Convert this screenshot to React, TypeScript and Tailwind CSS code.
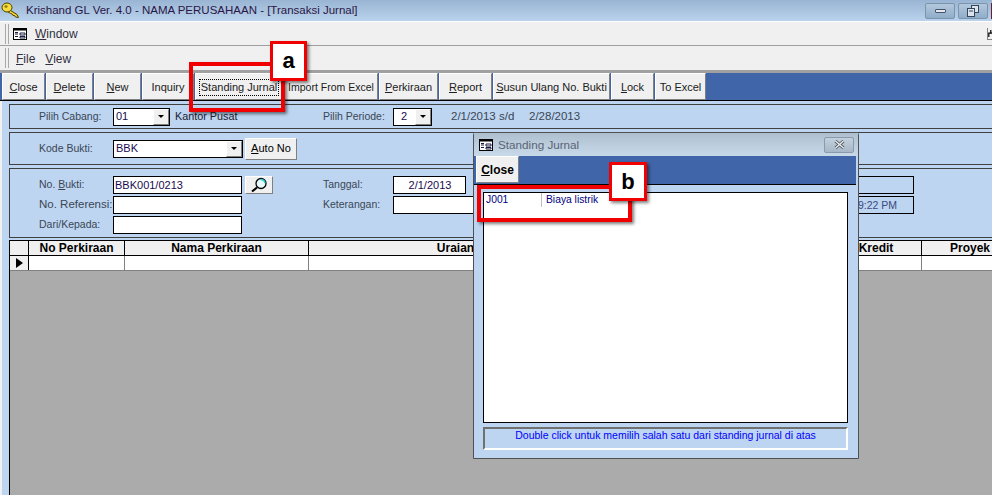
const buttons: { label: string; key?: string; rest: string; width: string; focus?: boolean }[] = [
  { label: "", key: "C", rest: "lose", width: "w-[43px]" },
  { label: "", key: "D", rest: "elete", width: "w-[47px]" },
  { label: "", key: "N", rest: "ew", width: "w-[47px]" },
  { label: "Inquiry", rest: "", width: "w-[52px]" },
  { label: "Standing Jurnal", rest: "", width: "w-[88px]", focus: true },
  { label: "Import From Excel", rest: "", width: "w-[94px] text-[10.5px]" },
  { label: "", key: "P", rest: "erkiraan", width: "w-[59px]" },
  { label: "", key: "R", rest: "eport", width: "w-[53px]" },
  { label: "", key: "S", rest: "usun Ulang No. Bukti", width: "w-[117px]" },
  { label: "", key: "L", rest: "ock", width: "w-[43px]" },
  { label: "To Excel", rest: "", width: "w-[51px]" },
];

const bevel = "border border-t-white border-l-white border-r-[#808080] border-b-[#808080] bg-[#f0f0f0]";

function FormIcon() {
  return (
    <svg width="14" height="12" viewBox="0 0 14 12" className="shrink-0">
      <rect x="0.5" y="0.5" width="13" height="11" fill="#fff" stroke="#000" />
      <rect x="1" y="1" width="12" height="1.5" fill="#000" />
      <path d="M2 4.5h3M2 6h3M2 8.5h3M7 5h5v2H7zM7 8.5h5v1.5H7z" stroke="#1a1a40" fill="none" />
    </svg>
  );
}

function KeyIcon() {
  return (
    <svg width="19" height="17" viewBox="0 0 19 17" className="ml-[1px] shrink-0">
      <path d="M8 7.5 16 12.5 17.5 15.5 14.5 15 13.5 13.5 12 13.5 11 12 9.5 11.5 6.5 9.5z" fill="#f0d030" stroke="#4a4000" strokeWidth="1" strokeLinejoin="round" />
      <ellipse cx="6" cy="5.5" rx="5" ry="4.5" fill="#f6dc3c" stroke="#4a4000" strokeWidth="1" />
      <ellipse cx="5" cy="4.5" rx="1.6" ry="1.3" fill="#8a7a10" />
    </svg>
  );
}

function ArrowBox() {
  return (
    <span className={`flex h-[16px] w-[16px] items-center justify-center ${bevel}`}>
      <span className="border-x-[3px] border-t-[3px] border-x-transparent border-t-black" />
    </span>
  );
}

function Select({ value, width, inset }: { value: string; width: string; inset: string }) {
  return (
    <div className={`flex h-[18px] items-center justify-between border border-black bg-white text-[#1a0a50] ${width}`}>
      <span className={inset}>{value}</span>
      <ArrowBox />
    </div>
  );
}

function Field({ width, value, center }: { width: string; value?: string; center?: boolean }) {
  return (
    <div className={`flex h-[18px] items-center border border-black bg-white pl-[1px] text-[#1a0a50] ${width} ${center ? "justify-center" : ""}`}>
      {value}
    </div>
  );
}

function Label({ width, children }: { width: string; children: React.ReactNode }) {
  return <div className={`shrink-0 text-[10.5px] text-[#3a4654] ${width}`}>{children}</div>;
}

function Callout({ box, tag, letter }: { box: string; tag: string; letter: string }) {
  return (
    <>
      <div className={`absolute border-[4px] border-[#f00000] shadow-[2px_2px_3px_rgba(0,0,0,0.5)] ${box}`} />
      <div className={`absolute flex items-center justify-center border-[3px] border-[#f00000] bg-white text-[22px] leading-none font-bold text-black shadow-[2px_2px_3px_rgba(0,0,0,0.5)] ${tag}`}>
        {letter}
      </div>
    </>
  );
}

export default function App() {
  return (
    <div className="relative flex h-[495px] w-[992px] flex-col overflow-hidden bg-[#f0f0f0] font-['Liberation_Sans',Arial,sans-serif] text-[11px] leading-none text-black">
      {/* title bar */}
      <div className="flex h-[22px] shrink-0 items-center border-b border-white bg-gradient-to-b from-[#99b5d3] to-[#bad2ec] pr-[1px]">
        <KeyIcon />
        <span className="ml-[6px] text-[11.5px] text-[#2a1646]">Krishand GL Ver. 4.0 - NAMA PERUSAHAAN - [Transaksi Jurnal]</span>
        <div className="ml-auto flex gap-[3px]">
          <div className="flex h-[16px] w-[30px] items-center justify-center rounded-[2px] border border-[#7b94ad] bg-gradient-to-b from-[#b4c8dc] to-[#8fadc9]">
            <span className="h-[4px] w-[11px] rounded-[1px] border border-[#44546a] bg-[#e4e8ee]" />
          </div>
          <div className="flex h-[16px] w-[30px] items-center justify-center rounded-[2px] border border-[#7b94ad] bg-gradient-to-b from-[#b4c8dc] to-[#8fadc9]">
            <svg width="12" height="12" viewBox="0 0 12 12" fill="#dbe3ec" stroke="#34465c">
              <rect x="4.5" y="0.5" width="7" height="7" />
              <rect x="0.5" y="3.5" width="7" height="8" />
              <path d="M2 6h4" />
            </svg>
          </div>
          <div className="-mr-[20px] h-[16px] w-[20px] bg-[#6a2030]" />
        </div>
      </div>

      {/* menu rows */}
      <div className="flex h-[24px] shrink-0 items-center border-b border-[#a0a0a0] pl-[5px] text-[12px] text-[#303040]">
        <span className="mr-[4px] h-[20px] w-[4px] border-x border-[#a8a8a8]" />
        <FormIcon />
        <span className="ml-[8px] pt-[1px]"><u>W</u>indow</span>
        <div className="ml-auto flex h-[12px] w-[5px] items-end border-b border-l border-[#808080]">
          <svg width="5" height="11" viewBox="0 0 5 11">
            <path d="M1 10V5h4M3.5 5V1" stroke="#000" fill="none" strokeWidth="1.5" />
          </svg>
        </div>
      </div>
      <div className="flex h-[27px] shrink-0 items-center border-b-[3px] border-[#a0a0a0] pl-[5px] text-[12px] text-[#303040]">
        <span className="mr-[7px] h-[20px] w-[4px] border-x border-[#a8a8a8]" />
        <span className="pt-[1px]"><u>F</u>ile</span>
        <span className="ml-[10px] pt-[1px]"><u>V</u>iew</span>
      </div>

      {/* toolbar */}
      <div className="flex h-[28px] shrink-0 gap-px border-b border-black bg-[#4065a8] pl-[2px]">
        {buttons.map((b) => (
          <div key={b.rest + b.label} className={`flex h-[27px] shrink-0 items-center justify-center pt-[1px] text-[#202020] ${bevel} ${b.width}`}>
            {b.focus ? (
              <span className="border border-dotted border-black px-[1px] py-[2px]">{b.label}</span>
            ) : (
              <span>
                {b.key && <u>{b.key}</u>}
                {b.label}
                {b.rest}
              </span>
            )}
          </div>
        ))}
      </div>

      {/* form */}
      <div className="ml-[2px] flex min-h-0 flex-1 flex-col bg-[#bdd5f1] pl-[7px] pt-[3px]">
        <div className="flex h-[25px] shrink-0 items-center border border-r-0 border-[#404040] pl-[29px]">
          <Label width="w-[74px]">Pilih Cabang:</Label>
          <Select value="01" width="w-[57px]" inset="pl-[2px]" />
          <span className="ml-[5px] w-[148px] text-[10.8px] text-[#202030]">Kantor Pusat</span>
          <Label width="w-[70px]">Pilih Periode:</Label>
          <Select value="2" width="w-[39px]" inset="pl-[7px]" />
          <span className="ml-[19px] w-[48px] text-[11.5px] text-[#3a4654]">2/1/2013</span>
          <span className="w-[30px] text-[11.5px] text-[#3a4654]">s/d</span>
          <span className="text-[11.5px] text-[#3a4654]">2/28/2013</span>
        </div>

        <div className="mt-[3px] flex h-[33px] shrink-0 items-center border border-r-0 border-[#404040] pl-[29px]">
          <Label width="w-[74px]">Kode Bukti:</Label>
          <Select value="BBK" width="w-[130px]" inset="pl-[2px]" />
          <div className={`ml-[2px] flex h-[22px] w-[52px] items-center justify-center ${bevel}`}>
            <span><u>A</u>uto No</span>
          </div>
        </div>

        <div className="mt-[3px] flex h-[70px] shrink-0 flex-col gap-[2px] border border-r-0 border-[#404040] pl-[29px] pt-[7px]">
          <div className="flex">
            <Label width="w-[74px] pt-[3px]">No. <u>B</u>ukti:</Label>
            <Field width="w-[129px]" value="BBK001/0213" />
            <div className={`ml-[3px] flex h-[18px] w-[28px] items-center justify-center ${bevel}`}>
              <svg width="18" height="16" viewBox="0 0 18 16" fill="none">
                <circle cx="11" cy="6.5" r="5" stroke="#000" strokeWidth="1.3" fill="#e8fbff" />
                <path d="M10.5 2.5a4.5 4.5 0 0 1 4.5 3.5" stroke="#28d0d8" strokeWidth="1.6" />
                <path d="M7 10.5 2 14.5" stroke="#000" strokeWidth="2.2" />
              </svg>
            </div>
            <Label width="ml-[50px] w-[70px] pt-[3px]">Tanggal:</Label>
            <Field width="w-[73px]" value="2/1/2013" center />
            <div className="ml-[134px] h-[18px] w-[314px] border border-black" />
          </div>
          <div className="flex">
            <Label width="w-[74px] pt-[3px] text-[11.5px]">No. Referensi:</Label>
            <Field width="w-[129px]" />
            <Label width="ml-[81px] w-[70px] pt-[3px]">Keterangan:</Label>
            <Field width="w-[203px]" />
            <div className="ml-[4px] flex h-[18px] w-[314px] items-center justify-end border border-black pr-[16px] text-[10.5px] text-[#3a4a80]">9:22 PM</div>
          </div>
          <div className="flex">
            <Label width="w-[74px] pt-[3px]">Dari/Kepada:</Label>
            <Field width="w-[129px]" />
          </div>
        </div>

        {/* grid */}
        <div className="mt-[2px] flex min-h-0 flex-1 flex-col border-l border-black bg-[#ababab]">
          <div className="flex h-[16px] shrink-0 border-y border-black bg-[#f0f0f0] text-[12px] leading-[14px] font-bold">
            <div className="w-[19px] shrink-0 border-r border-black" />
            <div className="w-[96px] shrink-0 border-r border-black text-center">No Perkiraan</div>
            <div className="w-[184px] shrink-0 border-r border-black text-center">Nama Perkiraan</div>
            <div className="w-[294px] shrink-0 border-r border-black text-center">Uraian</div>
            <div className="w-[228px] shrink-0 border-r border-black text-center">Debet</div>
            <div className="w-[91px] shrink-0 border-r border-black text-center">Kredit</div>
            <div className="w-[96px] shrink-0 text-center">Proyek</div>
          </div>
          <div className="flex h-[15px] shrink-0 border-b border-[#808080] bg-white">
            <div className="flex w-[19px] shrink-0 items-center justify-center border-r border-black bg-[#f0f0f0]">
              <span className="border-y-[5px] border-l-[7px] border-y-transparent border-l-black" />
            </div>
            <div className="w-[96px] shrink-0 border-r border-[#808080]" />
            <div className="w-[184px] shrink-0 border-r border-[#808080]" />
            <div className="w-[294px] shrink-0 border-r border-[#808080]" />
            <div className="w-[228px] shrink-0 border-r border-[#808080]" />
            <div className="w-[91px] shrink-0 border-r border-[#808080]" />
            <div className="w-[96px] shrink-0" />
          </div>
        </div>
      </div>

      {/* Standing Jurnal window */}
      <div className="absolute left-[473px] top-[132px] flex h-[327px] w-[386px] flex-col rounded-t-[3px] border border-[#505050] bg-[#bdd5f1]">
        <div className="flex h-[23px] shrink-0 items-center bg-gradient-to-b from-[#aebfd0] to-[#c8d9ea] pl-[5px] pr-[4px]">
          <FormIcon />
          <span className="ml-[5px] text-[11.7px] text-[#5a6472]">Standing Jurnal</span>
          <div className="ml-auto flex h-[16px] w-[30px] items-center justify-center rounded-[2px] border border-[#8a9aac] bg-gradient-to-b from-[#c4d0dc] to-[#a8b8c8]">
            <svg width="11" height="9" viewBox="0 0 11 9">
              <path d="M1.5 1 9.5 8M9.5 1 1.5 8" stroke="#505860" strokeWidth="3" />
              <path d="M1.5 1 9.5 8M9.5 1 1.5 8" stroke="#eef2f6" strokeWidth="1.3" />
            </svg>
          </div>
        </div>
        <div className="mr-[2px] flex h-[29px] shrink-0 border-b border-black bg-[#4065a8] pl-[2px]">
          <div className={`flex h-[27px] w-[43px] items-center justify-center text-[12px] font-bold ${bevel}`}>
            <span><u>C</u>lose</span>
          </div>
        </div>
        <div className="ml-[9px] mr-[10px] mt-[7px] h-[231px] shrink-0 border border-black bg-white">
          <div className="flex h-[14px] items-center text-[10.3px] text-[#000080]">
            <span className="flex h-full w-[58px] items-center border-r border-[#c0c0c0] pl-[2px]">J001</span>
            <span className="pl-[4px]">Biaya listrik</span>
          </div>
        </div>
        <div className="ml-[9px] mr-[10px] mt-[4px] h-[23px] shrink-0 border-2 border-b-white border-l-[#707070] border-r-white border-t-[#707070] pt-[1px] text-center text-[10.5px] text-[#0000ff]">
          Double click untuk memilih salah satu dari standing jurnal di atas
        </div>
      </div>

      <Callout box="left-[189px] top-[62px] h-[50px] w-[96px]" tag="left-[270px] top-[41px] h-[40px] w-[37px]" letter="a" />
      <Callout box="left-[477px] top-[185px] h-[37px] w-[155px]" tag="left-[609px] top-[162px] h-[39px] w-[38px]" letter="b" />
    </div>
  );
}
